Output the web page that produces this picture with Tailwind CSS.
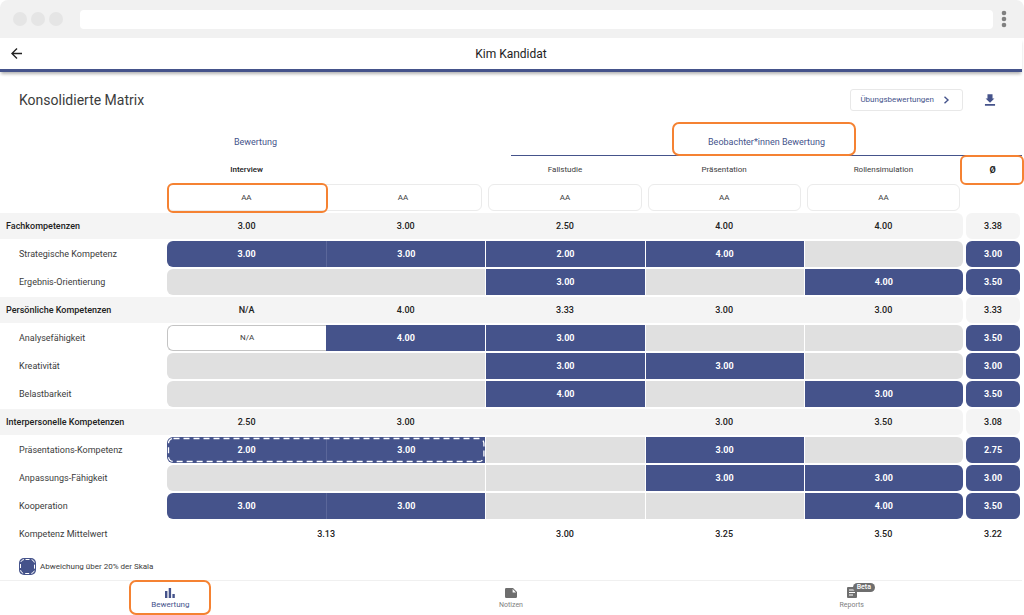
<!DOCTYPE html>
<html lang="de">
<head>
<meta charset="utf-8">
<meta name="viewport" content="width=device-width, initial-scale=1">
<title>Konsolidierte Matrix</title>
<script src="https://cdn.jsdelivr.net/npm/@tailwindcss/browser@4"></script>
</head>
<body class="flex min-h-screen flex-col bg-white font-['Roboto','Liberation_Sans',sans-serif] text-[9px] leading-4 text-[#3c3c3c]">

<!-- Browser frame -->
<div class="flex h-[38px] items-center rounded-t-lg bg-[#f1f1f1] pr-[15px] pl-[13px]">
  <div class="flex gap-1">
    <span class="size-[14px] rounded-full bg-[#e5e5e5]"></span>
    <span class="size-[14px] rounded-full bg-[#e5e5e5]"></span>
    <span class="size-[14px] rounded-full bg-[#e5e5e5]"></span>
  </div>
  <input type="text" aria-label="Adresse" class="mr-[6px] ml-[17px] h-[19px] min-w-0 flex-1 rounded-sm bg-white px-2 outline-none">
  <button type="button" aria-label="Menü" class="flex w-[10px] justify-center text-[#808080]">
    <svg width="6" height="18" viewBox="0 0 6 18" fill="currentColor"><circle cx="3" cy="3" r="2.3"/><circle cx="3" cy="9" r="2.3"/><circle cx="3" cy="15" r="2.3"/></svg>
  </button>
</div>

<div class="flex flex-1 flex-col pr-[2px]">
  <!-- App bar -->
  <header class="grid h-[34px] grid-cols-[1fr_auto_1fr] items-center border-b-[3px] border-[#45538b] shadow-[0_3px_3px_-1px_rgba(0,0,0,0.3)]">
    <a href="#" aria-label="Zurück" class="ml-[11px] w-[11px] text-[#222222]">
      <svg width="11" height="11" viewBox="4 4 16 16" fill="currentColor"><path d="M20 11H7.830l5.590-5.590L12 4l-8 8 8 8 1.410-1.410L7.830 13H20v-2z"/></svg>
    </a>
    <h1 class="pt-px text-xs text-[#222222]">Kim Kandidat</h1>
  </header>

  <div class="flex h-[55px] items-center justify-between pr-[26px] pl-[19px]">
    <h2 class="text-sm">Konsolidierte Matrix</h2>
    <div class="flex items-center gap-[21px]">
      <button type="button" class="flex h-[22px] items-center gap-[9px] rounded-[3px] border border-[#e8e8e8] pr-3 pl-[9px] text-[8px] text-[#45538b]">
        Übungsbewertungen
        <svg width="7" height="8" viewBox="0 0 7 8" fill="none" stroke="currentColor" stroke-width="1.4"><path d="M1.5.8 5 4 1.5 7.2"/></svg>
      </button>
      <button type="button" aria-label="Herunterladen" class="text-[#45538b]">
        <svg width="12" height="12" viewBox="4 2 16 19" fill="currentColor"><path d="M19 9h-3V2.500H8V9H5l7 7 7-7zM4 18v2.500h16V18H4z"/></svg>
      </button>
    </div>
  </div>

  <!-- Tabs -->
  <nav class="grid h-[29px] grid-cols-2 text-[#45538b]">
    <button type="button" class="border-b border-transparent pt-[2px]">Bewertung</button>
    <button type="button" class="relative border-b border-[#45538b] pt-[2px]">Beobachter*innen Bewertung
      <span class="absolute -top-[5px] right-[6px] -bottom-px left-0 mx-auto w-[184px] rounded-[7px] border-2 border-[#f58232]"></span>
    </button>
  </nav>

  <table class="w-full table-fixed border-separate border-spacing-x-0 border-spacing-y-[2px] text-center [&_td]:h-[26px] [&_td]:p-0">
    <colgroup><col class="w-[167px]"><col><col><col><col><col><col class="w-[59px]"></colgroup>
    <thead class="text-[8px] font-normal">
      <tr class="h-6 [&>th]:p-0 [&>th]:font-normal">
        <th></th>
        <th scope="col"><span class="font-medium text-[#222222]">Interview</span></th>
        <th></th>
        <th scope="col">Fallstudie</th>
        <th scope="col">Präsentation</th>
        <th scope="col">Rollensimulation</th>
        <th scope="col" class="relative"><span class="text-[9px] font-bold text-[#222222]">Ø</span>
          <span class="absolute -top-[3px] -right-[2px] -bottom-[3px] -left-[3px] rounded-[6px] border-2 border-[#f58232]"></span>
        </th>
      </tr>
      <tr class="h-[27px] [&>th]:p-0 [&>th]:font-normal">
        <th></th>
        <th colspan="2" class="relative">
          <div class="mr-[3px] grid h-[27px] grid-cols-2 items-center rounded-md border border-[#ebebeb]"><span>AA</span><span>AA</span></div>
          <span class="absolute -top-px right-1/2 -bottom-[2px] left-0 -mr-[2px] rounded-[6px] border-2 border-[#f58232]"></span>
        </th>
        <th class="px-[3px]!"><div class="flex h-[27px] items-center justify-center rounded-md border border-[#ebebeb]">AA</div></th>
        <th class="px-[3px]!"><div class="flex h-[27px] items-center justify-center rounded-md border border-[#ebebeb]">AA</div></th>
        <th class="px-[3px]!"><div class="flex h-[27px] items-center justify-center rounded-md border border-[#ebebeb]">AA</div></th>
        <th></th>
      </tr>
    </thead>
    <tbody class="[&_th]:p-0 [&_th]:text-left [&_th]:font-normal">
      <tr class="font-medium text-[#222222]">
        <th scope="row" class="bg-[#f4f4f4]"><span class="pl-[6px] font-medium">Fachkompetenzen</span></th>
        <td class="bg-[#f4f4f4]">3.00</td><td class="bg-[#f4f4f4]">3.00</td><td class="bg-[#f4f4f4]">2.50</td><td class="bg-[#f4f4f4]">4.00</td><td class="rounded-r-md bg-[#f4f4f4]">4.00</td>
        <td><div class="mr-[2px] ml-[3px] rounded-md bg-[#f4f4f4] py-[5px]">3.38</div></td>
      </tr>
      <tr class="font-bold text-white">
        <th scope="row"><span class="pl-[19px] text-[#3c3c3c]">Strategische Kompetenz</span></th>
        <td class="rounded-l-md bg-[#45538b]">3.00</td><td class="border-l border-[#5b679a] bg-[#45538b]">3.00</td><td class="border-l border-white bg-[#45538b]">2.00</td><td class="border-l border-white bg-[#45538b]">4.00</td><td class="rounded-r-md border-l border-white bg-[#e0e0e0]"></td>
        <td><div class="mr-[2px] ml-[3px] rounded-md bg-[#45538b] py-[5px]">3.00</div></td>
      </tr>
      <tr class="font-bold text-white">
        <th scope="row"><span class="pl-[19px] text-[#3c3c3c]">Ergebnis-Orientierung</span></th>
        <td colspan="2" class="rounded-l-md bg-[#e0e0e0]"></td><td class="border-l border-white bg-[#45538b]">3.00</td><td class="border-l border-white bg-[#e0e0e0]"></td><td class="rounded-r-md border-l border-white bg-[#45538b]">4.00</td>
        <td><div class="mr-[2px] ml-[3px] rounded-md bg-[#45538b] py-[5px]">3.50</div></td>
      </tr>
      <tr class="font-medium text-[#222222]">
        <th scope="row" class="bg-[#f4f4f4]"><span class="pl-[6px] font-medium">Persönliche Kompetenzen</span></th>
        <td class="bg-[#f4f4f4]">N/A</td><td class="bg-[#f4f4f4]">4.00</td><td class="bg-[#f4f4f4]">3.33</td><td class="bg-[#f4f4f4]">3.00</td><td class="rounded-r-md bg-[#f4f4f4]">3.00</td>
        <td><div class="mr-[2px] ml-[3px] rounded-md bg-[#f4f4f4] py-[5px]">3.33</div></td>
      </tr>
      <tr class="font-bold text-white">
        <th scope="row"><span class="pl-[19px] text-[#3c3c3c]">Analysefähigkeit</span></th>
        <td class="rounded-l-md border border-r-0 border-[#c4c4c4] text-[8px] font-normal text-[#3c3c3c]">N/A</td><td class="bg-[#45538b]">4.00</td><td class="border-l border-white bg-[#45538b]">3.00</td><td class="border-l border-white bg-[#e0e0e0]"></td><td class="rounded-r-md border-l border-white bg-[#e0e0e0]"></td>
        <td><div class="mr-[2px] ml-[3px] rounded-md bg-[#45538b] py-[5px]">3.50</div></td>
      </tr>
      <tr class="font-bold text-white">
        <th scope="row"><span class="pl-[19px] text-[#3c3c3c]">Kreativität</span></th>
        <td colspan="2" class="rounded-l-md bg-[#e0e0e0]"></td><td class="border-l border-white bg-[#45538b]">3.00</td><td class="border-l border-white bg-[#45538b]">3.00</td><td class="rounded-r-md border-l border-white bg-[#e0e0e0]"></td>
        <td><div class="mr-[2px] ml-[3px] rounded-md bg-[#45538b] py-[5px]">3.00</div></td>
      </tr>
      <tr class="font-bold text-white">
        <th scope="row"><span class="pl-[19px] text-[#3c3c3c]">Belastbarkeit</span></th>
        <td colspan="2" class="rounded-l-md bg-[#e0e0e0]"></td><td class="border-l border-white bg-[#45538b]">4.00</td><td class="border-l border-white bg-[#e0e0e0]"></td><td class="rounded-r-md border-l border-white bg-[#45538b]">3.00</td>
        <td><div class="mr-[2px] ml-[3px] rounded-md bg-[#45538b] py-[5px]">3.50</div></td>
      </tr>
      <tr class="font-medium text-[#222222]">
        <th scope="row" class="bg-[#f4f4f4]"><span class="pl-[6px] font-medium">Interpersonelle Kompetenzen</span></th>
        <td class="bg-[#f4f4f4]">2.50</td><td class="bg-[#f4f4f4]">3.00</td><td class="bg-[#f4f4f4]"></td><td class="bg-[#f4f4f4]">3.00</td><td class="rounded-r-md bg-[#f4f4f4]">3.50</td>
        <td><div class="mr-[2px] ml-[3px] rounded-md bg-[#f4f4f4] py-[5px]">3.08</div></td>
      </tr>
      <tr class="font-bold text-white">
        <th scope="row"><span class="pl-[19px] text-[#3c3c3c]">Präsentations-Kompetenz</span></th>
        <td colspan="2" class="relative rounded-l-md bg-[#45538b]">
          <div class="grid h-[26px] grid-cols-2"><span class="py-[5px]">2.00</span><span class="border-l border-[#5b679a] py-[5px]">3.00</span></div>
          <svg class="absolute inset-px h-6 w-[calc(100%-2px)] overflow-visible" fill="none" stroke="#ffffff" stroke-width="1.3" stroke-dasharray="6 4"><rect x="0.5" y="0.5" width="99.700%" height="23" rx="5"/></svg>
        </td>
        <td class="border-l border-white bg-[#e0e0e0]"></td><td class="border-l border-white bg-[#45538b]">3.00</td><td class="rounded-r-md border-l border-white bg-[#e0e0e0]"></td>
        <td><div class="mr-[2px] ml-[3px] rounded-md bg-[#45538b] py-[5px]">2.75</div></td>
      </tr>
      <tr class="font-bold text-white">
        <th scope="row"><span class="pl-[19px] text-[#3c3c3c]">Anpassungs-Fähigkeit</span></th>
        <td colspan="2" class="rounded-l-md bg-[#e0e0e0]"></td><td class="border-l border-white bg-[#e0e0e0]"></td><td class="border-l border-white bg-[#45538b]">3.00</td><td class="rounded-r-md border-l border-white bg-[#45538b]">3.00</td>
        <td><div class="mr-[2px] ml-[3px] rounded-md bg-[#45538b] py-[5px]">3.00</div></td>
      </tr>
      <tr class="font-bold text-white">
        <th scope="row"><span class="pl-[19px] text-[#3c3c3c]">Kooperation</span></th>
        <td class="rounded-l-md bg-[#45538b]">3.00</td><td class="border-l border-[#5b679a] bg-[#45538b]">3.00</td><td class="border-l border-white bg-[#e0e0e0]"></td><td class="border-l border-white bg-[#e0e0e0]"></td><td class="rounded-r-md border-l border-white bg-[#45538b]">4.00</td>
        <td><div class="mr-[2px] ml-[3px] rounded-md bg-[#45538b] py-[5px]">3.50</div></td>
      </tr>
      <tr class="font-medium text-[#222222]">
        <th scope="row"><span class="pl-[19px] text-[#3c3c3c]">Kompetenz Mittelwert</span></th>
        <td colspan="2">3.13</td><td>3.00</td><td>3.25</td><td>3.50</td>
        <td><div class="mr-[2px] ml-[3px]">3.22</div></td>
      </tr>
    </tbody>
  </table>

  <div class="flex flex-1 items-center gap-1 pt-1 pl-[19px] text-[8px]">
    <svg width="17" height="17" viewBox="0 0 17 17"><rect width="17" height="17" rx="5" fill="#45538b"/><rect x="1.500" y="1.500" width="14" height="14" rx="4" fill="none" stroke="#ffffff" stroke-width="1" stroke-dasharray="4 2.140" stroke-dashoffset="-1"/></svg>
    <span>Abweichung über 20% der Skala</span>
  </div>

  <!-- Bottom navigation -->
  <nav class="grid h-[35px] grid-cols-3 border-t border-[#f0f0f0] text-[7px] leading-[10px] text-[#808080]">
    <a href="#" class="relative flex flex-col items-center justify-end gap-[2px] pb-[5px] text-[8px] text-[#45538b]">
      <svg width="10" height="10" viewBox="0 0 10 10" fill="currentColor"><path d="M0 3h2.400v7H0zM3.700 0h2.400v10H3.700zM7.400 6h2.400v4H7.400z"/></svg>
      Bewertung
      <span class="absolute inset-x-0 -top-px bottom-0 mx-auto w-[82px] rounded-[7px] border-2 border-[#f58232]"></span>
    </a>
    <a href="#" class="flex flex-col items-center justify-end gap-[2px] pb-[5px]">
      <svg width="12" height="10" viewBox="0 0 12 10"><path d="M1.200 0h6.800L12 4v4.800A1.200 1.200 0 0 1 10.800 10H1.200A1.200 1.200 0 0 1 0 8.800V1.200A1.200 1.200 0 0 1 1.200 0z" fill="#6e6e6e"/><path d="M7.600 1v3.400H11z" fill="#ffffff"/></svg>
      Notizen
    </a>
    <a href="#" class="flex flex-col items-center justify-end gap-[2px] pb-[5px]">
      <span class="relative">
        <svg width="10" height="12" viewBox="0 0 10 12"><rect y="1" width="10" height="11" rx="1" fill="#6e6e6e"/><path d="M2 4h6M2 6.500h6M2 9h4" stroke="#ffffff" stroke-width="1.100"/></svg>
        <span class="absolute -top-[3px] left-[6px] rounded-full bg-[#6e6e6e] px-1 text-[7px] leading-[9px] font-medium text-white">Beta</span>
      </span>
      Reports
    </a>
  </nav>
</div>
</body>
</html>
